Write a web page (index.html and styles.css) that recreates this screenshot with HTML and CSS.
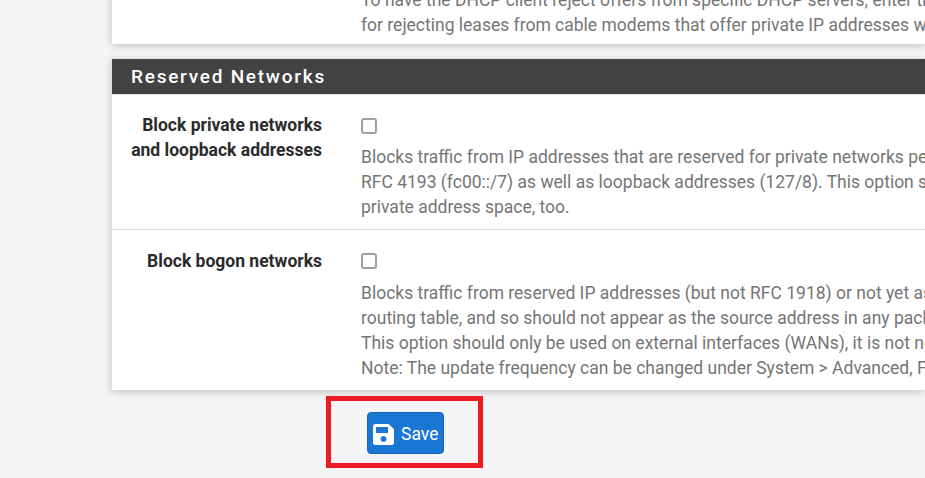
FILE: index.html
```html
<!DOCTYPE html>
<html lang="en">
<head>
  <meta charset="UTF-8">
  <meta name="viewport" content="width=device-width, initial-scale=1.0">
  <title>Interfaces - WAN</title>
  <link rel="stylesheet" href="styles.css">
</head>
<body>
  <div class="content">
    <div class="panel panel-top">
      <div class="row">
        <div class="label"></div>
        <div class="field">
          <p class="help">To have the DHCP client reject offers from specific DHCP servers, enter th<br>for rejecting leases from cable modems that offer private IP addresses w</p>
        </div>
      </div>
    </div>

    <div class="panel">
      <h2 class="panel-title">Reserved Networks</h2>
      <div class="row">
        <div class="label">Block private networks<br>and loopback addresses</div>
        <div class="field">
          <input class="check" type="checkbox">
          <p class="help">Blocks traffic from IP addresses that are reserved for private networks pe<br>RFC 4193 (fc00::/7) as well as loopback addresses (127/8). This option s<br>private address space, too.</p>
        </div>
      </div>
      <div class="row row-last">
        <div class="label">Block bogon networks</div>
        <div class="field">
          <input class="check" type="checkbox">
          <p class="help">Blocks traffic from reserved IP addresses (but not RFC 1918) or not yet as<br>routing table, and so should not appear as the source address in any pack<br>This option should only be used on external interfaces (WANs), it is not ne<br>Note: The update frequency can be changed under System &gt; Advanced, F</p>
        </div>
      </div>
    </div>

    <div class="actions">
      <div class="highlight">
        <button class="btn-save" type="button">
          <svg class="btn-icon" viewBox="0 32 448 448" aria-hidden="true"><path fill="currentColor" d="M433.9 129.9l-83.9-83.9A48 48 0 0 0 316.1 32H48C21.5 32 0 53.5 0 80v352c0 26.5 21.5 48 48 48h352c26.5 0 48-21.5 48-48V163.9a48 48 0 0 0-14.1-34zM224 416c-35.3 0-64-28.7-64-64s28.7-64 64-64 64 28.7 64 64-28.7 64-64 64zm96-304.5V212c0 6.6-5.4 12-12 12H76c-6.6 0-12-5.4-12-12V108c0-6.6 5.4-12 12-12h228.5c3.2 0 6.2 1.3 8.5 3.5l3.5 3.5c2.3 2.3 3.5 5.3 3.5 8.5z"/></svg>
          Save
        </button>
      </div>
    </div>
  </div>
</body>
</html>
```

FILE: styles.css
```css
html, body {
  height: 100%;
  overflow: hidden;
}
body {
  font-family: Roboto, "Liberation Sans", sans-serif;
  background: #f5f5f5;
  margin: 0;
  padding: 0;
}
.content {
  margin-top: -51px;
  padding-left: 111px;
}
.panel {
  background: #fff;
  border-left: 1px solid #e0e0e0;
  box-shadow: 0 2px 8px rgba(0,0,0,0.2);
  margin-bottom: 14px;
}
.panel-top .row {
  height: 95px;
  box-sizing: border-box;
  border-top: 0;
  align-items: flex-end;
}
.panel-top .help {
  padding-bottom: 6px;
}
.panel-title {
  margin: 0;
  height: 35px;
  line-height: 35px;
  background: #424242;
  border-top: 1px solid #e0e0e0;
  border-bottom: 1px solid #e0e0e0;
  color: #fff;
  font-size: 19px;
  font-weight: 500;
  letter-spacing: 1.75px;
  padding-left: 19px;
}
.row {
  display: flex;
  border-top: 1px solid #e0e0e0;
}
.panel-title + .row {
  border-top: 0;
}
.label {
  flex: none;
  width: 210px;
  padding: 18px 0 0;
  text-align: right;
  font-size: 17.5px;
  font-weight: 700;
  line-height: 25px;
  color: #2b2b2b;
}
.row-last .label {
  padding-top: 19px;
}
.field {
  margin-left: 39px;
  padding-top: 23px;
  padding-bottom: 9px;
  white-space: nowrap;
  overflow: hidden;
}
.panel-top .field {
  padding: 0;
}
.check {
  display: block;
  appearance: none;
  width: 16px;
  height: 16px;
  margin: 0 0 11px 0;
  background: #fff;
  border: 2px solid #9e9ea6;
  border-radius: 3px;
  box-sizing: border-box;
}
.row-last .check {
  margin-bottom: 12px;
}
.help {
  margin: 0;
  font-size: 17.5px;
  line-height: 25px;
  color: #757575;
}
.actions {
  padding-left: 215px;
  margin-top: -8px;
}
.highlight {
  width: 157px;
  height: 72px;
  box-sizing: border-box;
  border: 5px solid #ed1c24;
  padding: 11px 0 0 36px;
}
.btn-save {
  display: flex;
  align-items: center;
  gap: 7px;
  width: 77px;
  height: 42px;
  padding: 2px 0 0 5px;
  background: #1976d2;
  color: #fff;
  border: 1px solid #1565c0;
  border-radius: 4px;
  font-family: inherit;
  font-size: 17.5px;
  cursor: pointer;
}
.btn-icon {
  width: 21px;
  height: 21px;
  flex: none;
}
```
